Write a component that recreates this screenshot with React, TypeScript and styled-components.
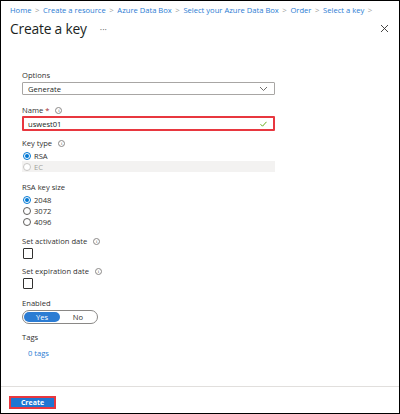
import React from "react";
import styled, { createGlobalStyle } from "styled-components";

const Global = createGlobalStyle`
  html, body { margin: 0; padding: 0; background: #fff; }
  body { font-family: "Open Sans", "Liberation Sans", sans-serif; }
  * { box-sizing: border-box; }
`;

const Frame = styled.div`
  width: 400px;
  height: 414px;
  border: 1px solid #000;
  display: flex;
  flex-direction: column;
  background: #fff;
  color: #323130;
  overflow: hidden;
`;

const Crumbs = styled.nav`
  display: flex;
  align-items: center;
  gap: 3.5px;
  padding: 3px 0 0 9px;
  height: 14px;
  font-size: 7.6px;
  color: #2b7cd3;
  white-space: nowrap;
`;

const Sep = styled.span`
  color: #a19f9d;
  font-size: 8px;
`;

const Header = styled.div`
  display: flex;
  align-items: center;
  height: 24px;
  padding: 0 0 0 9px;
  margin-top: 1px;
`;

const Title = styled.h1`
  margin: 0;
  font-size: 13.8px;
  font-weight: 400;
  color: #201f1e;
  letter-spacing: -0.2px;
`;

const More = styled.span`
  margin-left: 13px;
  font-size: 9px;
  color: #605e5c;
  margin-top: 2px;
`;

const Close = styled.button`
  margin-left: auto;
  margin-right: 10px;
  border: 0;
  background: none;
  padding: 0;
  width: 10px;
  height: 10px;
  display: flex;
  align-items: center;
  justify-content: center;
`;

const Form = styled.div`
  flex: 1;
  display: flex;
  flex-direction: column;
  padding: 0 0 0 21px;
  width: 274px;
`;

const Field = styled.div<{ $top: number }>`
  display: flex;
  flex-direction: column;
  margin-top: ${(p) => p.$top}px;
`;

const Label = styled.div`
  display: flex;
  align-items: center;
  gap: 3px;
  height: 10px;
  font-size: 7.6px;
  color: #323130;
  margin-bottom: 2px;
`;

const Req = styled.span`
  color: #a4262c;
  margin-left: -1px;
`;

const Info = styled.span`
  width: 7px;
  height: 7px;
  border-radius: 50%;
  border: 0.8px solid #8a8886;
  font-size: 5px;
  line-height: 6px;
  text-align: center;
  color: #605e5c;
  margin-left: 3px;
  font-family: "Liberation Serif", serif;
`;

const Box = styled.div<{ $error?: boolean }>`
  height: ${(p) => (p.$error ? 15 : 13)}px;
  border: ${(p) => (p.$error ? "2px solid #e8373f" : "1px solid #a8a6a4")};
  border-radius: 1px;
  display: flex;
  align-items: center;
  padding: 0 6px 0 ${(p) => (p.$error ? 4 : 5)}px;
  font-size: 7.6px;
  color: #201f1e;
  margin-top: ${(p) => (p.$error ? -1 : 0)}px;
`;

const Value = styled.span`
  flex: 1;
`;

const Option = styled.label<{ $disabled?: boolean }>`
  display: flex;
  align-items: center;
  gap: 3px;
  height: 11px;
  font-size: 7.6px;
  color: ${(p) => (p.$disabled ? "#a19f9d" : "#323130")};
  background: ${(p) => (p.$disabled ? "#f3f2f1" : "transparent")};
`;

const Radio = styled.span<{ $on?: boolean; $disabled?: boolean }>`
  width: 8px;
  height: 8px;
  border-radius: 50%;
  border: 1px solid ${(p) => (p.$on ? "#0078d4" : p.$disabled ? "#c8c6c4" : "#605e5c")};
  display: flex;
  align-items: center;
  justify-content: center;
  margin-left: 1px;
  background: #fff;
  &::after {
    content: "";
    width: 4px;
    height: 4px;
    border-radius: 50%;
    background: ${(p) => (p.$on ? "#0078d4" : "transparent")};
  }
`;

const Check = styled.span`
  width: 10px;
  height: 11px;
  border: 1px solid #323130;
  border-radius: 1px;
  margin-left: 1px;
`;

const Toggle = styled.div`
  width: 76px;
  height: 14px;
  border: 1px solid #8a8886;
  border-radius: 7px;
  display: flex;
  align-items: center;
  padding: 0 1px;
`;

const Seg = styled.span<{ $on?: boolean }>`
  flex: 1;
  height: 10px;
  border-radius: 5px;
  display: flex;
  align-items: center;
  justify-content: center;
  font-size: 7.6px;
  color: ${(p) => (p.$on ? "#fff" : "#323130")};
  background: ${(p) => (p.$on ? "#2b7cd3" : "transparent")};
`;

const Link = styled.a`
  font-size: 7.6px;
  color: #2b7cd3;
  margin: 4px 0 0 6px;
  text-decoration: none;
`;

const Footer = styled.div`
  border-top: 1px solid #e1dfdd;
  height: 27px;
  display: flex;
  align-items: center;
  padding: 5px 0 0 8px;
`;

const Outline = styled.div`
  border: 2px solid #e8373f;
  padding: 0;
  display: flex;
`;

const Primary = styled.button`
  width: 43px;
  height: 9px;
  border: 0;
  background: #1f76d2;
  color: #fff;
  font-family: inherit;
  font-weight: 700;
  font-size: 7px;
  padding: 0;
  line-height: 9px;
`;

const crumbs = [
  "Home",
  "Create a resource",
  "Azure Data Box",
  "Select your Azure Data Box",
  "Order",
  "Select a key",
];

const Chevron = () => (
  <svg width="9" height="6" viewBox="0 0 9 6">
    <path d="M1 1l3.5 3.5L8 1" fill="none" stroke="#605e5c" strokeWidth="0.9" />
  </svg>
);

const Tick = () => (
  <svg width="7" height="6" viewBox="0 0 7 6">
    <path d="M0.5 3.2l2 2L6.5 0.8" fill="none" stroke="#57a300" strokeWidth="0.9" />
  </svg>
);

const InfoIcon = () => <Info>i</Info>;

export default function App() {
  return (
    <>
      <Global />
      <Frame>
        <Crumbs>
          {crumbs.map((c) => (
            <React.Fragment key={c}>
              <span>{c}</span>
              <Sep>&gt;</Sep>
            </React.Fragment>
          ))}
        </Crumbs>
        <Header>
          <Title>Create a key</Title>
          <More>···</More>
          <Close aria-label="Close">
            <svg width="9" height="9" viewBox="0 0 9 9">
              <path d="M1 1l7 7M8 1L1 8" stroke="#323130" strokeWidth="0.9" />
            </svg>
          </Close>
        </Header>
        <Form>
          <Field $top={30}>
            <Label>Options</Label>
            <Box>
              <Value>Generate</Value>
              <Chevron />
            </Box>
          </Field>
          <Field $top={10}>
            <Label>
              Name <Req>*</Req>
              <InfoIcon />
            </Label>
            <Box $error>
              <Value>uswest01</Value>
              <Tick />
            </Box>
          </Field>
          <Field $top={7}>
            <Label>
              Key type <InfoIcon />
            </Label>
            <Option>
              <Radio $on />
              RSA
            </Option>
            <Option $disabled>
              <Radio $disabled />
              EC
            </Option>
          </Field>
          <Field $top={10}>
            <Label>RSA key size</Label>
            <Option>
              <Radio $on />
              2048
            </Option>
            <Option>
              <Radio />
              3072
            </Option>
            <Option>
              <Radio />
              4096
            </Option>
          </Field>
          <Field $top={9}>
            <Label>
              Set activation date <InfoIcon />
            </Label>
            <Check />
          </Field>
          <Field $top={7}>
            <Label>
              Set expiration date <InfoIcon />
            </Label>
            <Check />
          </Field>
          <Field $top={9}>
            <Label>Enabled</Label>
            <Toggle>
              <Seg $on>Yes</Seg>
              <Seg>No</Seg>
            </Toggle>
          </Field>
          <Field $top={8}>
            <Label>Tags</Label>
            <Link href="#">0 tags</Link>
          </Field>
        </Form>
        <Footer>
          <Outline>
            <Primary>Create</Primary>
          </Outline>
        </Footer>
      </Frame>
    </>
  );
}
